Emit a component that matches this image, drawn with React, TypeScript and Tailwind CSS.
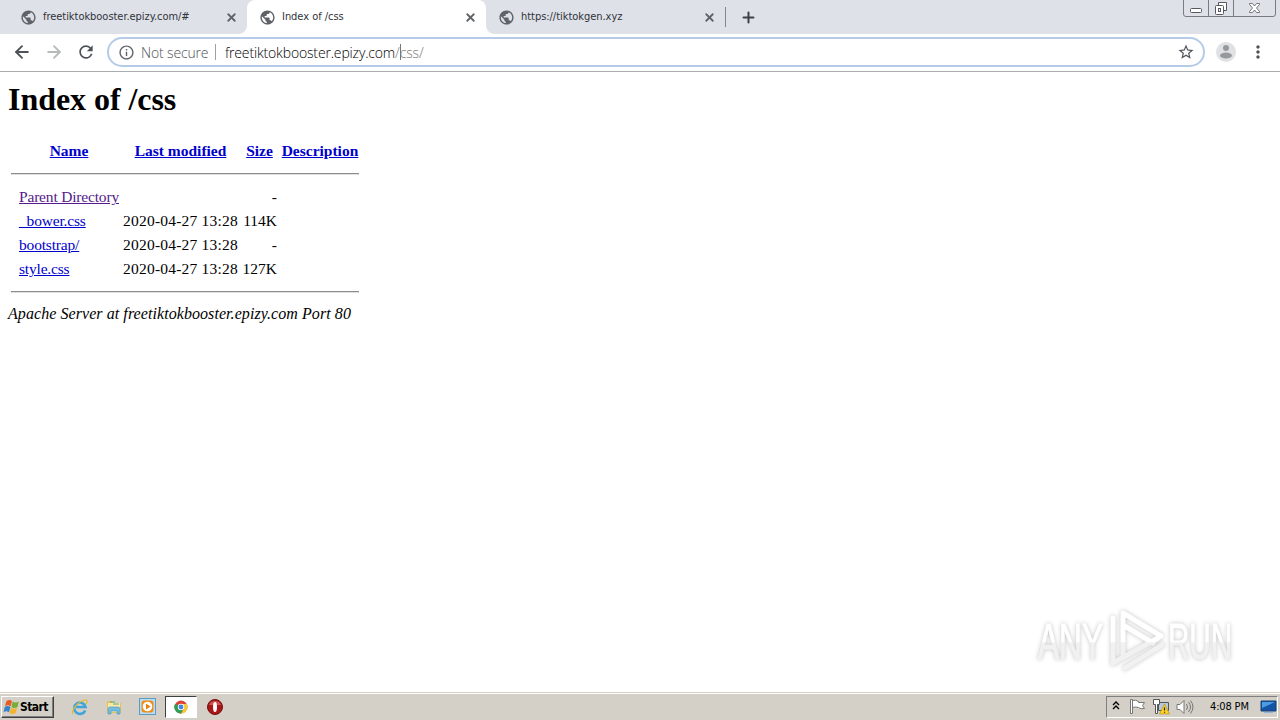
import { ArrowLeft, ArrowRight, Plus, X } from 'lucide-react';
import { MdMoreVert, MdPublic, MdRefresh, MdInfoOutline, MdStarBorder } from 'react-icons/md';

interface Tab {
    title: string;
    active?: boolean;
}

interface Entry {
    name: string;
    modified: string;
    size: string;
    visited?: boolean;
}

const tabs: Tab[] = [
    { title: 'freetiktokbooster.epizy.com/#' },
    { title: 'Index of /css', active: true },
    { title: 'https://tiktokgen.xyz' },
];

const entries: Entry[] = [
    { name: 'Parent Directory', modified: '', size: '-', visited: true },
    { name: '_bower.css', modified: '2020-04-27 13:28', size: '114K' },
    { name: 'bootstrap/', modified: '2020-04-27 13:28', size: '-' },
    { name: 'style.css', modified: '2020-04-27 13:28', size: '127K' },
];

const columns = ['Name', 'Last modified', 'Size', 'Description'];

function TabItem({ tab }: { tab: Tab }) {
    return (
        <div
            className={`relative flex h-[34px] w-[239px] items-center pr-[9px] pl-[13px] ${
                tab.active ? 'rounded-t-lg bg-white' : ''
            }`}
        >
            {tab.active && (
                <>
                    <div className="absolute bottom-0 -left-2 h-2 w-2 bg-[radial-gradient(circle_at_0_0,transparent_7.5px,white_8px)]" />
                    <div className="absolute -right-2 bottom-0 h-2 w-2 bg-[radial-gradient(circle_at_100%_0,transparent_7.5px,white_8px)]" />
                </>
            )}
            <MdPublic size={17} className="-ml-px shrink-0 text-[#5f6368]" />
            <span className="ml-[6px] flex-1 text-[11px] tracking-[-0.04px] whitespace-nowrap text-[#303338]">
                {tab.title}
            </span>
            <X size={13} strokeWidth={3.4} className="text-[#5f6368]" />
        </div>
    );
}

function WindowControls() {
    return (
        <svg width="94" height="18" viewBox="0 0 94 18" fill="none" stroke="#777b82">
            <path d="M.5 0v14q0 2.500 2.500 2.500h87q2.500 0 2.500-2.500V0M25.500 0v16M50.500 0v16" />
            <g stroke="#55585e">
                <rect x="7.500" y="8.500" width="11" height="4" rx="1" fill="#fff" />
                <path d="M35.500 5V2.500h8v8H41" fill="#fff" />
                <rect x="32.500" y="5.500" width="8" height="9" rx="1" fill="#fff" />
                <rect x="35.500" y="8.500" width="2" height="3" />
                <path
                    d="M66.500 3.500h3l2 2.500 2-2.500h3v1L73.500 8l3 3.500v1h-3l-2-2.500-2 2.500h-3v-1l3-3.500-3-3.500z"
                    fill="#fff"
                    strokeWidth=".8"
                />
            </g>
        </svg>
    );
}

function TabStrip() {
    return (
        <div className="flex h-[34px] items-center bg-[#dee1e8] pl-2">
            {tabs.map((tab) => (
                <TabItem key={tab.title} tab={tab} />
            ))}
            <div className="h-5 w-px bg-[#83878d]" />
            <Plus size={17} strokeWidth={2.8} className="ml-[14px] text-[#3c4043]" />
            <div className="ml-auto self-start pr-[3px]">
                <WindowControls />
            </div>
        </div>
    );
}

function Toolbar() {
    return (
        <div className="flex h-[38px] items-center border-b border-[#aaadb0] bg-white pb-px pl-[12px]">
            <ArrowLeft size={20} strokeWidth={2.3} className="text-[#4f5358]" />
            <ArrowRight size={20} strokeWidth={2.2} className="ml-[12px] text-[#b7b9bb]" />
            <MdRefresh size={20} className="ml-[12px] text-[#4f5358]" />
            <div className="ml-[11px] flex h-[30px] w-[1098px] items-center rounded-full border-2 border-[#b6cbe8] pr-2 pl-[9px]">
                <MdInfoOutline size={17} className="text-[#5f6368]" />
                <span className="ml-[6px] w-[67px] font-['Open_Sans'] text-[14px] font-light tracking-[-0.15px] whitespace-nowrap text-[#4f5358]">
                    Not secure
                </span>
                <div className="ml-[7px] h-4 w-px bg-[#9da0a4]" />
                <div className="ml-[9px] flex items-center font-['Open_Sans'] text-[14px] font-light tracking-[-0.16px] text-black">
                    <span>freetiktokbooster.epizy.com</span>
                    <span className="text-[#777]">/</span>
                    <span className="-mr-px h-4 w-px bg-[#777]" />
                    <span className="text-[#777]">css/</span>
                </div>
                <MdStarBorder size={18} className="ml-auto text-[#4f5358]" />
            </div>
            <svg className="ml-[11px]" width="20" height="20" viewBox="0 0 20 20">
                <circle cx="10" cy="10" r="10" fill="#e0e1e2" />
                <circle cx="10" cy="6" r="3" fill="#96999c" />
                <ellipse cx="10" cy="13.500" rx="6" ry="3" fill="#96999c" />
            </svg>
            <MdMoreVert size={20} className="ml-[12px] text-[#4f5358]" />
        </div>
    );
}

function Rule() {
    return <hr className="mt-[10px] ml-[11px] h-[2px] w-[348px] border-t border-b border-t-[#8d8d8d] border-b-[#dedede]" />;
}

function DirectoryListing() {
    return (
        <main className="flex-1 bg-white font-['Liberation_Serif',serif] text-[16px] text-black">
            <h1 className="ml-2 h-[67px] pt-[9px] text-[32px] leading-9 font-bold tracking-[-0.05px]">Index of /css</h1>
            <div className="ml-[19px] grid h-6 w-[340px] grid-cols-[100px_115px_35px_78px] items-center gap-x-1 text-center font-bold">
                {columns.map((column) => (
                    <a key={column} className="text-[15.5px] whitespace-nowrap text-[#0000cc] underline">
                        {column}
                    </a>
                ))}
            </div>
            <Rule />
            <div className="mt-[10px] ml-[19px]">
                {entries.map((entry) => (
                    <div key={entry.name} className="grid h-6 grid-cols-[100px_115px_35px_78px] items-center gap-x-1 text-[15.5px] whitespace-nowrap">
                        <a className={`tracking-[-0.18px] underline ${entry.visited ? 'text-[#551a8b]' : 'text-[#0000cc]'}`}>
                            {entry.name}
                        </a>
                        <span className="tracking-[0.22px]">{entry.modified}</span>
                        <span className="text-right">{entry.size}</span>
                    </div>
                ))}
            </div>
            <Rule />
            <address className="mt-[9px] ml-2 text-[16px] leading-6 tracking-[0.07px] italic">
                Apache Server at freetiktokbooster.epizy.com Port 80
            </address>
        </main>
    );
}

function Watermark() {
    return (
        <svg
            className="absolute top-[602px] left-[1030px] drop-shadow-[0_0_2px_rgba(0,0,0,0.24)]"
            width="230"
            height="76"
            viewBox="0 0 230 76"
        >
            <defs>
                <linearGradient id="shine" x1="0" y1="0" x2="0" y2="76" gradientUnits="userSpaceOnUse">
                    <stop offset="0.52" stopColor="#fff" />
                    <stop offset="0.54" stopColor="#f1f1f1" />
                </linearGradient>
            </defs>
            <g
                fill="url(#shine)"
                stroke="url(#shine)"
                strokeWidth="1"
                fontFamily="Liberation Sans Narrow, Liberation Sans, sans-serif"
                fontSize="50"
            >
                <text x="8" y="57" textLength="65" lengthAdjust="spacingAndGlyphs">
                    ANY
                </text>
                <text x="138" y="57" textLength="64" lengthAdjust="spacingAndGlyphs">
                    RUN
                </text>
            </g>
            <g fill="none" stroke="url(#shine)" strokeWidth="5" strokeLinejoin="round" strokeLinecap="round">
                <path d="M83 16v45l45-25" />
                <path d="M93 53V11l38 23M93 23l30 18M95 66l37-23" />
            </g>
        </svg>
    );
}

function StartButton() {
    return (
        <div className="flex h-[22px] w-[53px] items-center border border-t-white border-r-[#404040] border-b-[#404040] border-l-white pl-px text-[12px] font-bold text-black shadow-[inset_-1px_-1px_#808080]">
            <svg width="17" height="16" viewBox="0 0 17 16" className="shrink-0">
                <path d="M3.500 2q3-2 5.500 0L7.700 7.200q-3-2-5.800 0z" fill="#e65b28" />
                <path d="M9.700 2.500q3 2 6 0L14.500 8q-3 2-6 0z" fill="#78ad36" />
                <path d="M1.700 8q3-2 5.800 0L6 13.300q-3-2-5.500 0z" fill="#3684c7" />
                <path d="M8.200 8.800q3 2 6 0L12.700 14q-3 2-6 0z" fill="#f4b52b" />
            </svg>
            <span className="tracking-[-0.6px]">Start</span>
        </div>
    );
}

function ExplorerIcon() {
    return (
        <svg width="18" height="18" viewBox="0 0 18 18">
            <path d="M2 3h5l1 2h8v10H2z" fill="#e5c35b" />
            <path d="M3 5h12v9H3z" fill="#f8e9a7" />
            <path d="M5 4h5M8 6h6" stroke="#60aa76" />
            <path d="M3 16V11q0-2 2-2h8q2 0 2 2v5h-3v-3H6v3z" fill="#74bce0" stroke="#4894bc" strokeWidth=".6" />
        </svg>
    );
}

function IeIcon() {
    return (
        <svg width="18" height="18" viewBox="0 0 18 18" fill="none">
            <path d="M14.200 12.500A5.700 5.700 0 1 1 14.500 9H5" stroke="#3fa4db" strokeWidth="2.600" />
            <path d="M2 16C-1 14 7 3 14 2c3-.4 2 3 1 4" stroke="#e8b82e" strokeWidth="1.200" />
        </svg>
    );
}

function PlayerIcon() {
    return (
        <svg width="17" height="17" viewBox="0 0 17 17">
            <rect x=".5" y=".5" width="16" height="16" fill="#b9dcf0" stroke="#5e9bc4" />
            <rect x="2.500" y="2.500" width="12" height="12" rx="3" fill="#f28b13" />
            <circle cx="8.500" cy="8.500" r="4.800" fill="#fff" />
            <path d="M7 5.500v6l4.500-3z" fill="#ed7d0d" />
        </svg>
    );
}

function ChromeIcon() {
    return (
        <svg width="14" height="14" viewBox="0 0 14 14">
            <circle cx="7" cy="7" r="6.500" fill="#dc4535" />
            <path d="M7 7 1.200 3.700A6.500 6.500 0 0 0 7 13.500l3-5z" fill="#319c52" />
            <path d="M7 4h5.800A6.500 6.500 0 0 1 7 13.500L10 8.500z" fill="#f7c933" />
            <circle cx="7" cy="7" r="3.200" fill="#fff" />
            <circle cx="7" cy="7" r="2.400" fill="#4285e8" />
        </svg>
    );
}

function OperaIcon() {
    return (
        <svg width="16" height="16" viewBox="0 0 16 16">
            <circle cx="8" cy="8" r="7.500" fill="#aa1717" stroke="#72100f" />
            <path d="M2 6a6.500 6.500 0 0 1 12 0" fill="#cf5654" />
            <ellipse cx="8" cy="8" rx="2" ry="5" fill="#fff" />
        </svg>
    );
}

function Tray() {
    return (
        <div className="ml-auto flex h-[22px] w-[172px] items-center border border-t-[#808080] border-r-white border-b-white border-l-[#808080] pl-[5px]">
            <svg width="8" height="9" viewBox="0 0 8 9" fill="none" stroke="#000" strokeWidth="1.400" className="mb-[3px]">
                <path d="m1 4 3-3 3 3M1 8l3-3 3 3" />
            </svg>
            <svg className="ml-[9px]" width="17" height="17" viewBox="0 0 17 17" fill="#fff" stroke="#777">
                <path d="M3.500 2.500q3-1 6 1v1h6l-2 3 2 3q-4 1-6-1-3-1-6 0z" />
                <path d="M1.500 1.500h2v14h-2z" />
            </svg>
            <svg className="ml-[7px]" width="17" height="17" viewBox="0 0 17 17">
                <path d="M5.500 4.500h10v8h-10z" fill="#b4cad7" stroke="#555" />
                <path d="M7 15.500h5" stroke="#555" />
                <path d="M.5 1.500h6v5h-2v9h-2v-9h-2z" fill="#fff" stroke="#555" />
                <path d="m11.500 6 5 10H6.500z" fill="#ffd229" stroke="#b18816" strokeWidth=".6" />
                <path d="M11.500 9.500v3M11.500 13.700v1" stroke="#222" strokeWidth="1.200" />
            </svg>
            <svg className="ml-[6px]" width="18" height="16" viewBox="0 0 18 16" fill="none" stroke="#777">
                <path d="M1 5.500h3l4-4v13l-4-4H1z" fill="#fff" />
                <path d="M10.500 5q2 3 0 6M12.500 3q4 5 0 10M14.500 1.500q5 6.500 0 13" />
            </svg>
            <span className="mt-[2px] ml-[16px] w-[40px] text-[11px] tracking-[-0.15px] whitespace-nowrap text-black">4:08 PM</span>
            <svg className="ml-[10px]" width="17" height="15" viewBox="0 0 17 15">
                <path d="M1 2h15v10H1z" fill="#1553a5" stroke="#174278" />
                <path d="M2 3h13L2 9z" fill="#4d9ce4" />
                <path d="M4 13.500h9" stroke="#90b6dc" />
            </svg>
        </div>
    );
}

function Taskbar() {
    return (
        <footer className="flex h-7 items-center border-t border-[#d4d0c8] bg-[#d4d0c8] pr-[2px] pl-px shadow-[inset_0_1px_#fff]">
            <StartButton />
            <div className="ml-[17px] flex items-center">
                <IeIcon />
                <div className="ml-[16px]">
                    <ExplorerIcon />
                </div>
                <div className="ml-[16px]">
                    <PlayerIcon />
                </div>
                <div className="ml-[9px] flex h-[22px] w-8 items-center justify-center border border-t-[#404040] border-r-white border-b-white border-l-[#404040] bg-white">
                    <ChromeIcon />
                </div>
                <div className="ml-[10px]">
                    <OperaIcon />
                </div>
            </div>
            <Tray />
        </footer>
    );
}

export default function App() {
    return (
        <div className="relative flex h-[720px] w-[1280px] flex-col overflow-hidden bg-white font-['DejaVu_Sans_Condensed','DejaVu_Sans',sans-serif]">
            <TabStrip />
            <Toolbar />
            <DirectoryListing />
            <Taskbar />
            <Watermark />
        </div>
    );
}
